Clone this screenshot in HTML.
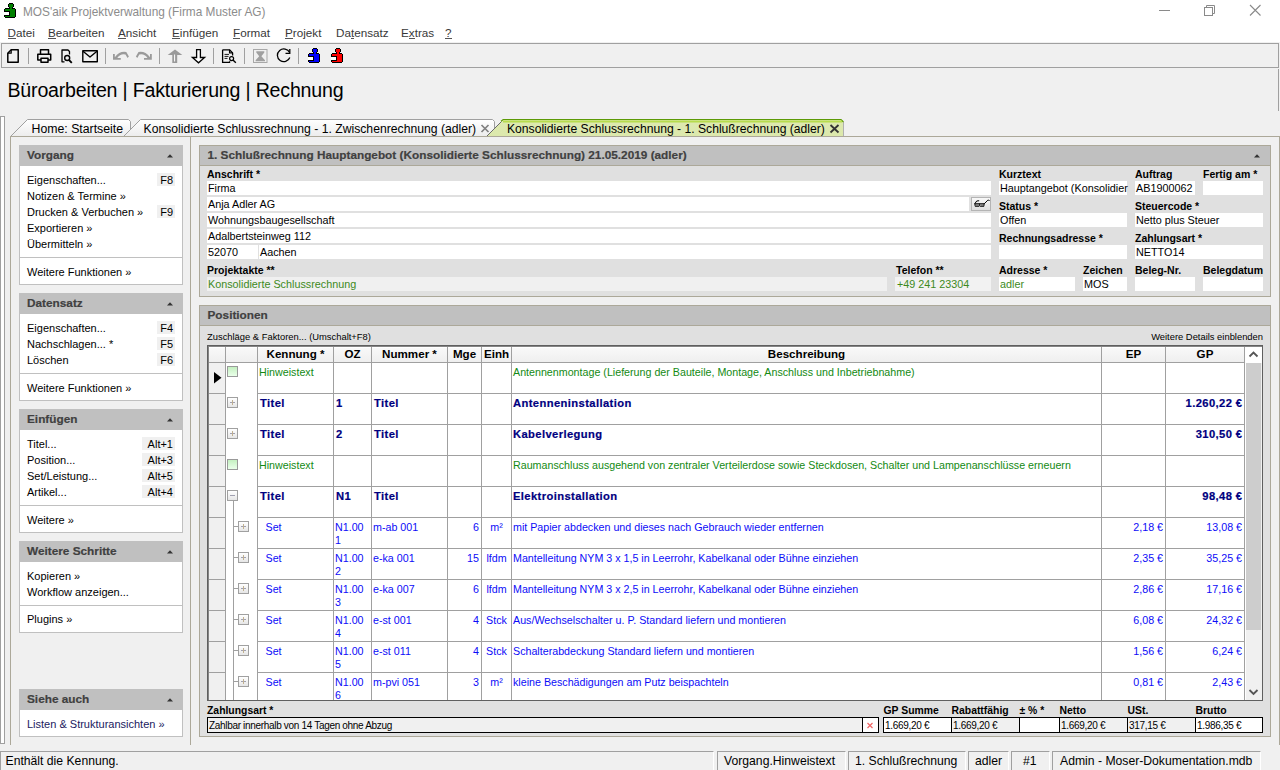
<!DOCTYPE html><html><head><meta charset="utf-8"><style>
html,body{margin:0;padding:0;}
body{width:1280px;height:770px;overflow:hidden;position:relative;background:#f0f0f0;font-family:"Liberation Sans",sans-serif;}
.t{position:absolute;white-space:nowrap;line-height:1;}
.r{position:absolute;}
svg{position:absolute;}
</style></head><body>
<div class="r" style="left:0px;top:0px;width:1280px;height:42px;background:#fff"></div>
<svg style="left:4px;top:3px" width="12" height="15" viewBox="0 0 12 15" shape-rendering="crispEdges"><rect x="5" y="0" width="4" height="1" fill="#000"/><rect x="4" y="1" width="6" height="3" fill="#000"/><rect x="5" y="4" width="4" height="1" fill="#000"/><rect x="1" y="5" width="10" height="1" fill="#000"/><rect x="0" y="6" width="12" height="8" fill="#000"/><rect x="1" y="14" width="10" height="1" fill="#000"/><rect x="0" y="9" width="5" height="3" fill="#fff"/><rect x="5" y="1" width="4" height="3" fill="#008000"/><rect x="6" y="4" width="2" height="2" fill="#008000"/><rect x="1" y="6" width="10" height="2" fill="#008000"/><rect x="6" y="8" width="5" height="5" fill="#008000"/><rect x="1" y="13" width="10" height="1" fill="#008000"/></svg>
<div class="t " style="left:23px;top:6.97px;font-size:11.85px;color:#8c8c8c;">MOS'aik Projektverwaltung (Firma Muster AG)</div>
<div class="r" style="left:1159px;top:10px;width:11px;height:1px;background:#8a8a8a"></div>
<svg style="left:1200px;top:2px" width="20" height="16" viewBox="0 0 20 16">
<rect x="4.5" y="5.5" width="8" height="8" fill="none" stroke="#8a8a8a" stroke-width="1"/>
<path d="M6.5 5.5v-2h8v8h-2" fill="none" stroke="#8a8a8a" stroke-width="1"/>
</svg>
<svg style="left:1248px;top:3px" width="14" height="14" viewBox="0 0 14 14">
<path d="M2 2L12.5 12.5M12.5 2L2 12.5" stroke="#8a8a8a" stroke-width="1.1"/>
</svg>
<div class="t " style="left:7.5px;top:26.80px;font-size:11.7px;color:#383838;">Datei</div>
<div class="r" style="left:8px;top:38px;width:8px;height:1px;background:#555"></div>
<div class="t " style="left:48px;top:26.80px;font-size:11.7px;color:#383838;">Bearbeiten</div>
<div class="r" style="left:48px;top:38px;width:8px;height:1px;background:#555"></div>
<div class="t " style="left:118px;top:26.80px;font-size:11.7px;color:#383838;">Ansicht</div>
<div class="r" style="left:118px;top:38px;width:8px;height:1px;background:#555"></div>
<div class="t " style="left:172px;top:26.80px;font-size:11.7px;color:#383838;">Einfügen</div>
<div class="r" style="left:172px;top:38px;width:8px;height:1px;background:#555"></div>
<div class="t " style="left:233px;top:26.80px;font-size:11.7px;color:#383838;">Format</div>
<div class="r" style="left:233px;top:38px;width:7px;height:1px;background:#555"></div>
<div class="t " style="left:285px;top:26.80px;font-size:11.7px;color:#383838;">Projekt</div>
<div class="r" style="left:285px;top:38px;width:8px;height:1px;background:#555"></div>
<div class="t " style="left:336px;top:26.80px;font-size:11.7px;color:#383838;">Datensatz</div>
<div class="r" style="left:351px;top:38px;width:3px;height:1px;background:#555"></div>
<div class="t " style="left:401px;top:26.80px;font-size:11.7px;color:#383838;">Extras</div>
<div class="r" style="left:409px;top:38px;width:6px;height:1px;background:#555"></div>
<div class="t " style="left:445px;top:26.80px;font-size:11.7px;color:#383838;">?</div>
<div class="r" style="left:445px;top:38px;width:7px;height:1px;background:#555"></div>
<div class="r" style="left:0px;top:42px;width:1280px;height:1px;background:#f0f0f0"></div>
<div class="r" style="left:1px;top:43px;width:1278px;height:25px;border:1px solid #a0a0a0;box-sizing:border-box;background:#f0f0f0;"></div>
<div class="r" style="left:28px;top:48px;width:1px;height:16px;background:#a0a0a0"></div>
<div class="r" style="left:105px;top:48px;width:1px;height:16px;background:#a0a0a0"></div>
<div class="r" style="left:159px;top:48px;width:1px;height:16px;background:#a0a0a0"></div>
<div class="r" style="left:213px;top:48px;width:1px;height:16px;background:#a0a0a0"></div>
<div class="r" style="left:244px;top:48px;width:1px;height:16px;background:#a0a0a0"></div>
<div class="r" style="left:298px;top:48px;width:1px;height:16px;background:#a0a0a0"></div>
<svg style="left:0;top:44px" width="360" height="23" viewBox="0 44 360 23">
<g fill="none" stroke="#000" stroke-width="1.5" stroke-linejoin="round">
 <path d="M11.2 49.8H18.2V62.2H7.8V53.2z"/><path d="M7.8 53.2H11.2V49.8" stroke-width="1.2"/>
 <path d="M40.5 54V49.8H48.5V54"/>
 <path d="M41 60H37.8V54.3H50.7V60H48"/>
 <rect x="41" y="58.3" width="7" height="4"/>
 <path d="M64.5 61.8H62V50h6l1.5 1.5v3" stroke-width="1.3"/>
 <circle cx="67.2" cy="58" r="2.5" stroke-width="1.4"/><path d="M69 60l2.8 2.8" stroke-width="1.8"/>
 <rect x="82.8" y="50.8" width="14.5" height="11" stroke-width="1.4"/><path d="M83 51.2l7 5.8 7-5.8" stroke-width="1.4"/>
</g>
<g fill="#9a9a9a">
 <path d="M113 54h1.8v3.2q5-6.5 11.5-5.2l2.6 4.6-1.4 1.4-2-3.4q-5-1.2-8.2 3.4h3.5v1.8h-7.8z"/>
 <path d="M151.8 54h-1.8v3.2q-5-6.5-11.5-5.2l-2.6 4.6 1.4 1.4 2-3.4q5-1.2 8.2 3.4h-3.5v1.8h7.8z"/>
 <path d="M175 49.5L182.3 55H177.2V63H172.3V55H167.7z"/>
</g>
<path d="M174.6 54.5V61.5" stroke="#fff" stroke-width="1"/>
<path d="M196.6 49.6H200.4V57.5H204.6L198.5 62.8 192.4 57.5H196.6z" fill="#fff" stroke="#000" stroke-width="1.3" stroke-linejoin="miter"/>
<g fill="none" stroke="#000" stroke-linejoin="round">
 <path d="M222.6 49.8H229.5L232.6 52.9V55.5M229.6 61.2V62.4H222.6V49.8" stroke-width="1.3"/>
 <path d="M229.5 49.8V52.9H232.6" stroke-width="1.1"/>
 <path d="M224.5 54.4H229M224.5 56.4H228.5M224.5 58.4H227.5" stroke-width="0.9"/>
 <circle cx="231.6" cy="58.6" r="2" stroke-width="1.2"/><path d="M233 60l2.8 2.8" stroke-width="1.4"/>
</g>
<rect x="253.5" y="49.5" width="13.5" height="13" fill="none" stroke="#a8a8a8" stroke-width="1"/>
<path d="M256.3 51.2H264.3V52.6L261.4 56.2L265 60.2V61.3H255.6V60.2L259.2 56.2L256.3 52.6z" fill="#a0a0a0"/>
<path d="M289.6 52.6A6.4 6.4 0 1 0 289.8 57.5" fill="none" stroke="#000" stroke-width="1.3"/>
<path d="M285.5 53.3H289.8V49" fill="none" stroke="#000" stroke-width="1.3"/>
</svg>
<svg style="left:308px;top:48px" width="12" height="15" viewBox="0 0 12 15" shape-rendering="crispEdges"><rect x="5" y="0" width="4" height="1" fill="#000"/><rect x="4" y="1" width="6" height="3" fill="#000"/><rect x="5" y="4" width="4" height="1" fill="#000"/><rect x="1" y="5" width="10" height="1" fill="#000"/><rect x="0" y="6" width="12" height="8" fill="#000"/><rect x="1" y="14" width="10" height="1" fill="#000"/><rect x="0" y="9" width="5" height="3" fill="#fff"/><rect x="5" y="1" width="4" height="3" fill="#0000ff"/><rect x="6" y="4" width="2" height="2" fill="#0000ff"/><rect x="1" y="6" width="10" height="2" fill="#0000ff"/><rect x="6" y="8" width="5" height="5" fill="#0000ff"/><rect x="1" y="13" width="10" height="1" fill="#0000ff"/></svg>
<svg style="left:331px;top:48px" width="12" height="15" viewBox="0 0 12 15" shape-rendering="crispEdges"><rect x="5" y="0" width="4" height="1" fill="#000"/><rect x="4" y="1" width="6" height="3" fill="#000"/><rect x="5" y="4" width="4" height="1" fill="#000"/><rect x="1" y="5" width="10" height="1" fill="#000"/><rect x="0" y="6" width="12" height="8" fill="#000"/><rect x="1" y="14" width="10" height="1" fill="#000"/><rect x="0" y="9" width="5" height="3" fill="#fff"/><rect x="5" y="1" width="4" height="3" fill="#ff0000"/><rect x="6" y="4" width="2" height="2" fill="#ff0000"/><rect x="1" y="6" width="10" height="2" fill="#ff0000"/><rect x="6" y="8" width="5" height="5" fill="#ff0000"/><rect x="1" y="13" width="10" height="1" fill="#ff0000"/></svg>
<div class="r" style="left:1278px;top:69px;width:1px;height:42px;background:#a0a0a0"></div>
<div class="t " style="left:7.5px;top:81.01px;font-size:19.6px;color:#000;letter-spacing:-0.2px;">Büroarbeiten | Fakturierung | Rechnung</div>
<div class="r" style="left:0px;top:116px;width:5px;height:628px;border:1px solid #a0a0a0;border-bottom:1px solid #a0a0a0;box-sizing:border-box;background:#fff"></div>
<svg style="left:0;top:110px" width="1280" height="30" viewBox="0 110 1280 30">
<defs>
<linearGradient id="tg" x1="0" y1="0" x2="0" y2="1"><stop offset="0" stop-color="#ffffff"/><stop offset="1" stop-color="#ececec"/></linearGradient>
<linearGradient id="ag" x1="0" y1="0" x2="0" y2="1"><stop offset="0" stop-color="#dde9b0"/><stop offset="1" stop-color="#dce8ac"/></linearGradient>
</defs>
<path d="M10.5 136.5L27.5 119.5H128.5L130.5 121.5V136.5" fill="url(#tg)" stroke="#a0a0a0" stroke-width="1"/>
<path d="M123.5 136.5L140.5 119.5H492.5L494.5 121.5V136.5" fill="url(#tg)" stroke="#a0a0a0" stroke-width="1"/>
<path d="M486.5 136.5L503.5 119.5H841l2.5 2.5V136.5z" fill="url(#ag)" stroke="none"/>
<path d="M486.5 136.5L501.5 121.5" stroke="#6a6a6a" stroke-width="1" fill="none"/>
<path d="M843.5 136.5V122" stroke="#b0b0b0" stroke-width="1"/>
<path d="M501 121.2L503.2 119.5H841l2.5 2.5" stroke="#5c9a06" stroke-width="1.2" fill="none"/>
<path d="M503 121.5H842" stroke="#b7dc4e" stroke-width="2"/>
<path d="M10 136.5H1280" stroke="#aca899" stroke-width="1"/>
<path d="M481.5 125l7 7M488.5 125l-7 7" stroke="#808080" stroke-width="1.7"/>
<path d="M830.5 125l8 7.5M838.5 125l-8 7.5" stroke="#333" stroke-width="1.8"/>
</svg>
<div class="t " style="left:31.5px;top:123.19px;font-size:12.3px;color:#000;">Home: Startseite</div>
<div class="t " style="left:143.5px;top:123.27px;font-size:12.2px;color:#000;">Konsolidierte Schlussrechnung - 1. Zwischenrechnung (adler)</div>
<div class="t " style="left:507px;top:123.32px;font-size:12.15px;color:#000;">Konsolidierte Schlussrechnung - 1. Schlußrechnung (adler)</div>
<div class="r" style="left:10px;top:137px;width:1px;height:608px;background:#aca899"></div>
<div class="r" style="left:1279px;top:137px;width:1px;height:608px;background:#aca899"></div>
<div class="r" style="left:190px;top:137px;width:1px;height:608px;background:#aca899"></div>
<div class="r" style="left:19px;top:145px;width:164px;height:21px;background:#c0c0c0"></div>
<div class="r" style="left:19px;top:165px;width:164px;height:120px;border:1px solid #c0c0c0;box-sizing:border-box;background:#fff;"></div>
<div class="t " style="left:27px;top:150.01px;font-size:11.8px;color:#404040;font-weight:bold;-webkit-text-stroke:0.2px #404040;">Vorgang</div>
<svg style="left:166px;top:153px" width="8" height="5" viewBox="0 0 8 5"><path d="M1 4.5L4 1.2 7 4.5z" fill="#333"/></svg>
<div class="r" style="left:19px;top:257px;width:164px;height:1px;background:#c0c0c0"></div>
<div class="t " style="left:27px;top:174.69px;font-size:11px;color:#000;">Eigenschaften...</div>
<div class="r" style="left:157px;top:173px;width:18px;height:13px;background:#f0f0f0"></div>
<div class="t" style="right:1107px;top:174.69px;font-size:11px;color:#000;">F8</div>
<div class="t " style="left:27px;top:190.69px;font-size:11px;color:#000;">Notizen &amp; Termine »</div>
<div class="t " style="left:27px;top:206.69px;font-size:11px;color:#000;">Drucken &amp; Verbuchen »</div>
<div class="r" style="left:157px;top:205px;width:18px;height:13px;background:#f0f0f0"></div>
<div class="t" style="right:1107px;top:206.69px;font-size:11px;color:#000;">F9</div>
<div class="t " style="left:27px;top:222.69px;font-size:11px;color:#000;">Exportieren »</div>
<div class="t " style="left:27px;top:238.69px;font-size:11px;color:#000;">Übermitteln »</div>
<div class="t " style="left:27px;top:266.69px;font-size:11px;color:#000;">Weitere Funktionen »</div>
<div class="r" style="left:19px;top:293px;width:164px;height:21px;background:#c0c0c0"></div>
<div class="r" style="left:19px;top:313px;width:164px;height:88px;border:1px solid #c0c0c0;box-sizing:border-box;background:#fff;"></div>
<div class="t " style="left:27px;top:298.01px;font-size:11.8px;color:#404040;font-weight:bold;-webkit-text-stroke:0.2px #404040;">Datensatz</div>
<svg style="left:166px;top:301px" width="8" height="5" viewBox="0 0 8 5"><path d="M1 4.5L4 1.2 7 4.5z" fill="#333"/></svg>
<div class="r" style="left:19px;top:373px;width:164px;height:1px;background:#c0c0c0"></div>
<div class="t " style="left:27px;top:322.69px;font-size:11px;color:#000;">Eigenschaften...</div>
<div class="r" style="left:157px;top:321px;width:18px;height:13px;background:#f0f0f0"></div>
<div class="t" style="right:1107px;top:322.69px;font-size:11px;color:#000;">F4</div>
<div class="t " style="left:27px;top:338.69px;font-size:11px;color:#000;">Nachschlagen... *</div>
<div class="r" style="left:157px;top:337px;width:18px;height:13px;background:#f0f0f0"></div>
<div class="t" style="right:1107px;top:338.69px;font-size:11px;color:#000;">F5</div>
<div class="t " style="left:27px;top:354.69px;font-size:11px;color:#000;">Löschen</div>
<div class="r" style="left:157px;top:353px;width:18px;height:13px;background:#f0f0f0"></div>
<div class="t" style="right:1107px;top:354.69px;font-size:11px;color:#000;">F6</div>
<div class="t " style="left:27px;top:383.29px;font-size:11px;color:#000;">Weitere Funktionen »</div>
<div class="r" style="left:19px;top:409px;width:164px;height:21px;background:#c0c0c0"></div>
<div class="r" style="left:19px;top:429px;width:164px;height:104px;border:1px solid #c0c0c0;box-sizing:border-box;background:#fff;"></div>
<div class="t " style="left:27px;top:414.01px;font-size:11.8px;color:#404040;font-weight:bold;-webkit-text-stroke:0.2px #404040;">Einfügen</div>
<svg style="left:166px;top:417px" width="8" height="5" viewBox="0 0 8 5"><path d="M1 4.5L4 1.2 7 4.5z" fill="#333"/></svg>
<div class="r" style="left:19px;top:505px;width:164px;height:1px;background:#c0c0c0"></div>
<div class="t " style="left:27px;top:438.69px;font-size:11px;color:#000;">Titel...</div>
<div class="r" style="left:142px;top:437px;width:33px;height:13px;background:#f0f0f0"></div>
<div class="t" style="right:1107px;top:438.69px;font-size:11px;color:#000;">Alt+1</div>
<div class="t " style="left:27px;top:454.69px;font-size:11px;color:#000;">Position...</div>
<div class="r" style="left:142px;top:453px;width:33px;height:13px;background:#f0f0f0"></div>
<div class="t" style="right:1107px;top:454.69px;font-size:11px;color:#000;">Alt+3</div>
<div class="t " style="left:27px;top:470.69px;font-size:11px;color:#000;">Set/Leistung...</div>
<div class="r" style="left:142px;top:469px;width:33px;height:13px;background:#f0f0f0"></div>
<div class="t" style="right:1107px;top:470.69px;font-size:11px;color:#000;">Alt+5</div>
<div class="t " style="left:27px;top:486.69px;font-size:11px;color:#000;">Artikel...</div>
<div class="r" style="left:142px;top:485px;width:33px;height:13px;background:#f0f0f0"></div>
<div class="t" style="right:1107px;top:486.69px;font-size:11px;color:#000;">Alt+4</div>
<div class="t " style="left:27px;top:515.19px;font-size:11px;color:#000;">Weitere »</div>
<div class="r" style="left:19px;top:541px;width:164px;height:21px;background:#c0c0c0"></div>
<div class="r" style="left:19px;top:561px;width:164px;height:72px;border:1px solid #c0c0c0;box-sizing:border-box;background:#fff;"></div>
<div class="t " style="left:27px;top:546.01px;font-size:11.8px;color:#404040;font-weight:bold;-webkit-text-stroke:0.2px #404040;">Weitere Schritte</div>
<svg style="left:166px;top:549px" width="8" height="5" viewBox="0 0 8 5"><path d="M1 4.5L4 1.2 7 4.5z" fill="#333"/></svg>
<div class="r" style="left:19px;top:605px;width:164px;height:1px;background:#c0c0c0"></div>
<div class="t " style="left:27px;top:570.69px;font-size:11px;color:#000;">Kopieren »</div>
<div class="t " style="left:27px;top:586.69px;font-size:11px;color:#000;">Workflow anzeigen...</div>
<div class="t " style="left:27px;top:614.09px;font-size:11px;color:#000;">Plugins »</div>
<div class="r" style="left:19px;top:689px;width:164px;height:21px;background:#c0c0c0"></div>
<div class="r" style="left:19px;top:709px;width:164px;height:28px;border:1px solid #c0c0c0;box-sizing:border-box;background:#fff;"></div>
<div class="t " style="left:27px;top:694.01px;font-size:11.8px;color:#404040;font-weight:bold;-webkit-text-stroke:0.2px #404040;">Siehe auch</div>
<svg style="left:166px;top:697px" width="8" height="5" viewBox="0 0 8 5"><path d="M1 4.5L4 1.2 7 4.5z" fill="#333"/></svg>
<div class="t " style="left:27px;top:718.69px;font-size:11px;color:#1a1a60;">Listen &amp; Strukturansichten »</div>
<div class="r" style="left:199px;top:145px;width:1072px;height:152px;border:1px solid #aca899;box-sizing:border-box;background:#e0e0e0;"></div>
<div class="r" style="left:200px;top:146px;width:1070px;height:19px;background:#c0c0c0"></div>
<div class="r" style="left:200px;top:165px;width:1070px;height:1px;background:#aca899"></div>
<div class="t " style="left:207.5px;top:150.01px;font-size:11.8px;color:#404040;font-weight:bold;-webkit-text-stroke:0.2px #404040;">1. Schlußrechnung Hauptangebot (Konsolidierte Schlussrechnung) 21.05.2019 (adler)</div>
<svg style="left:1253px;top:153px" width="8" height="5" viewBox="0 0 8 5"><path d="M1 4.5L4 1.2 7 4.5z" fill="#333"/></svg>
<div class="t " style="left:207px;top:168.91px;font-size:10.5px;color:#000;font-weight:bold;">Anschrift *</div>
<div class="r" style="left:207px;top:181px;width:784px;height:14px;background:#fff"></div>
<div class="t " style="left:208px;top:182.56px;font-size:10.8px;color:#000;">Firma</div>
<div class="r" style="left:207px;top:197px;width:762px;height:14px;background:#fff"></div>
<div class="t " style="left:208px;top:198.56px;font-size:10.8px;color:#000;">Anja Adler AG</div>
<div class="r" style="left:971px;top:197px;width:20px;height:14px;border:1px solid #b4b4b4;box-sizing:border-box;background:linear-gradient(#f8f8f8,#dedede)"></div>
<svg style="left:971px;top:197px" width="20" height="14" viewBox="0 0 20 14">
<g fill="none" stroke="#000" stroke-linecap="round"><path d="M3.8 6.8H13.2" stroke-width="1.3"/><path d="M4.6 9.2H7.6M9.6 9.2H12.6" stroke-width="1.2"/>
<path d="M4 7V8.8M8.5 7V8.8M13 7V8.6" stroke-width="0.8"/>
<path d="M4 6.2Q5.5 2.8 7.8 3.6" stroke-width="1"/><path d="M13.4 6.6L16.8 3.2Q17.8 2.6 18.4 3.6" stroke-width="1"/></g></svg>
<div class="r" style="left:207px;top:213px;width:784px;height:14px;background:#fff"></div>
<div class="t " style="left:208px;top:214.56px;font-size:10.8px;color:#000;">Wohnungsbaugesellschaft</div>
<div class="r" style="left:207px;top:229px;width:784px;height:14px;background:#fff"></div>
<div class="t " style="left:208px;top:230.56px;font-size:10.8px;color:#000;">Adalbertsteinweg 112</div>
<div class="r" style="left:207px;top:245px;width:51px;height:14px;background:#fff"></div>
<div class="t " style="left:208px;top:246.56px;font-size:10.8px;color:#000;">52070</div>
<div class="r" style="left:259px;top:245px;width:732px;height:14px;background:#fff"></div>
<div class="t " style="left:260px;top:246.56px;font-size:10.8px;color:#000;">Aachen</div>
<div class="t " style="left:207px;top:264.91px;font-size:10.5px;color:#000;font-weight:bold;">Projektakte **</div>
<div class="r" style="left:207px;top:277px;width:680px;height:14px;background:#f0f0f0"></div>
<div class="t " style="left:208px;top:278.56px;font-size:10.8px;color:#3d8a1c;">Konsolidierte Schlussrechnung</div>
<div class="t " style="left:896px;top:264.91px;font-size:10.5px;color:#000;font-weight:bold;">Telefon **</div>
<div class="r" style="left:895px;top:277px;width:96px;height:14px;background:#f2f2f2"></div>
<div class="t " style="left:897px;top:278.56px;font-size:10.8px;color:#3d8a1c;">+49 241 23304</div>
<div class="t " style="left:999px;top:168.91px;font-size:10.5px;color:#000;font-weight:bold;">Kurztext</div>
<div class="t " style="left:1135px;top:168.91px;font-size:10.5px;color:#000;font-weight:bold;">Auftrag</div>
<div class="t " style="left:1203px;top:168.91px;font-size:10.5px;color:#000;font-weight:bold;">Fertig am *</div>
<div class="r" style="left:999px;top:181px;width:128px;height:14px;background:#fff"></div>
<div class="t " style="left:1000px;top:182.56px;font-size:10.8px;color:#000;">Hauptangebot (Konsolidier</div>
<div class="r" style="left:1135px;top:181px;width:60px;height:14px;background:#fff"></div>
<div class="t " style="left:1136px;top:182.56px;font-size:10.8px;color:#000;">AB1900062</div>
<div class="r" style="left:1203px;top:181px;width:60px;height:14px;background:#fff"></div>
<div class="t " style="left:999px;top:200.91px;font-size:10.5px;color:#000;font-weight:bold;">Status *</div>
<div class="t " style="left:1135px;top:200.91px;font-size:10.5px;color:#000;font-weight:bold;">Steuercode *</div>
<div class="r" style="left:999px;top:213px;width:128px;height:14px;background:#fff"></div>
<div class="t " style="left:1000px;top:214.56px;font-size:10.8px;color:#000;">Offen</div>
<div class="r" style="left:1135px;top:213px;width:128px;height:14px;background:#fff"></div>
<div class="t " style="left:1136px;top:214.56px;font-size:10.8px;color:#000;">Netto plus Steuer</div>
<div class="t " style="left:999px;top:232.91px;font-size:10.5px;color:#000;font-weight:bold;">Rechnungsadresse *</div>
<div class="t " style="left:1135px;top:232.91px;font-size:10.5px;color:#000;font-weight:bold;">Zahlungsart *</div>
<div class="r" style="left:999px;top:245px;width:128px;height:14px;background:#fff"></div>
<div class="r" style="left:1135px;top:245px;width:128px;height:14px;background:#fff"></div>
<div class="t " style="left:1136px;top:246.56px;font-size:10.8px;color:#000;">NETTO14</div>
<div class="t " style="left:999px;top:264.91px;font-size:10.5px;color:#000;font-weight:bold;">Adresse *</div>
<div class="t " style="left:1083px;top:264.91px;font-size:10.5px;color:#000;font-weight:bold;">Zeichen</div>
<div class="t " style="left:1135px;top:264.91px;font-size:10.5px;color:#000;font-weight:bold;">Beleg-Nr.</div>
<div class="t " style="left:1203px;top:264.91px;font-size:10.5px;color:#000;font-weight:bold;">Belegdatum</div>
<div class="r" style="left:999px;top:277px;width:76px;height:14px;background:#fff"></div>
<div class="t " style="left:1000px;top:278.56px;font-size:10.8px;color:#3d8a1c;">adler</div>
<div class="r" style="left:1083px;top:277px;width:44px;height:14px;background:#fff"></div>
<div class="t " style="left:1084px;top:278.56px;font-size:10.8px;color:#000;">MOS</div>
<div class="r" style="left:1135px;top:277px;width:60px;height:14px;background:#fff"></div>
<div class="r" style="left:1203px;top:277px;width:60px;height:14px;background:#fff"></div>
<div class="r" style="left:199px;top:305px;width:1072px;height:432px;border:1px solid #aca899;box-sizing:border-box;background:#e0e0e0;"></div>
<div class="r" style="left:200px;top:306px;width:1070px;height:19px;background:#c0c0c0"></div>
<div class="r" style="left:200px;top:325px;width:1070px;height:1px;background:#aca899"></div>
<div class="t " style="left:207.5px;top:309.81px;font-size:11.8px;color:#404040;font-weight:bold;-webkit-text-stroke:0.2px #404040;">Positionen</div>
<div class="t " style="left:207px;top:332.04px;font-size:9.4px;color:#000;">Zuschläge &amp; Faktoren... (Umschalt+F8)</div>
<div class="t" style="right:17px;top:331.54px;font-size:9.4px;color:#000;">Weitere Details einblenden</div>
<div class="r" style="left:207px;top:345px;width:1056px;height:356px;border:1px solid #5f5f5f;box-sizing:border-box;background:#fff"></div>
<div class="r" style="left:208px;top:346px;width:1037px;height:16px;background:linear-gradient(#fafafa,#efefef)"></div>
<div class="r" style="left:209px;top:347px;width:1035px;height:1px;background:#ffffff"></div>
<div class="r" style="left:208px;top:363px;width:17px;height:337px;background:#f0f0f0"></div>
<div class="r" style="left:208px;top:362px;width:1036px;height:1px;background:#a0a0a0"></div>
<div class="r" style="left:225px;top:346px;width:1px;height:354px;background:#a0a0a0"></div>
<div class="r" style="left:257px;top:346px;width:1px;height:354px;background:#a0a0a0"></div>
<div class="r" style="left:333px;top:346px;width:1px;height:354px;background:#a0a0a0"></div>
<div class="r" style="left:371px;top:346px;width:1px;height:354px;background:#a0a0a0"></div>
<div class="r" style="left:447px;top:346px;width:1px;height:354px;background:#a0a0a0"></div>
<div class="r" style="left:481px;top:346px;width:1px;height:354px;background:#a0a0a0"></div>
<div class="r" style="left:511px;top:346px;width:1px;height:354px;background:#a0a0a0"></div>
<div class="r" style="left:1101px;top:346px;width:1px;height:354px;background:#a0a0a0"></div>
<div class="r" style="left:1165px;top:346px;width:1px;height:354px;background:#a0a0a0"></div>
<div class="r" style="left:1244px;top:346px;width:1px;height:354px;background:#a0a0a0"></div>
<div class="r" style="left:208px;top:393px;width:17px;height:1px;background:#a0a0a0"></div>
<div class="r" style="left:257px;top:393px;width:987px;height:1px;background:#a0a0a0"></div>
<div class="r" style="left:208px;top:424px;width:17px;height:1px;background:#a0a0a0"></div>
<div class="r" style="left:257px;top:424px;width:987px;height:1px;background:#a0a0a0"></div>
<div class="r" style="left:208px;top:455px;width:17px;height:1px;background:#a0a0a0"></div>
<div class="r" style="left:257px;top:455px;width:987px;height:1px;background:#a0a0a0"></div>
<div class="r" style="left:208px;top:486px;width:17px;height:1px;background:#a0a0a0"></div>
<div class="r" style="left:257px;top:486px;width:987px;height:1px;background:#a0a0a0"></div>
<div class="r" style="left:208px;top:517px;width:17px;height:1px;background:#a0a0a0"></div>
<div class="r" style="left:257px;top:517px;width:987px;height:1px;background:#a0a0a0"></div>
<div class="r" style="left:208px;top:548px;width:17px;height:1px;background:#a0a0a0"></div>
<div class="r" style="left:257px;top:548px;width:987px;height:1px;background:#a0a0a0"></div>
<div class="r" style="left:208px;top:579px;width:17px;height:1px;background:#a0a0a0"></div>
<div class="r" style="left:257px;top:579px;width:987px;height:1px;background:#a0a0a0"></div>
<div class="r" style="left:208px;top:610px;width:17px;height:1px;background:#a0a0a0"></div>
<div class="r" style="left:257px;top:610px;width:987px;height:1px;background:#a0a0a0"></div>
<div class="r" style="left:208px;top:641px;width:17px;height:1px;background:#a0a0a0"></div>
<div class="r" style="left:257px;top:641px;width:987px;height:1px;background:#a0a0a0"></div>
<div class="r" style="left:208px;top:672px;width:17px;height:1px;background:#a0a0a0"></div>
<div class="r" style="left:257px;top:672px;width:987px;height:1px;background:#a0a0a0"></div>
<div class="r" style="left:1245px;top:346px;width:17px;height:354px;background:#f0f0f0;border-left:1px solid #fff;box-sizing:border-box"></div>
<div class="r" style="left:1245px;top:346px;width:17px;height:17px;background:#fff"></div>
<div class="r" style="left:1246px;top:363px;width:15px;height:267px;background:#cdcdcd"></div>
<svg style="left:1245px;top:346px" width="17" height="17" viewBox="0 0 17 17"><path d="M4.5 10.5L8.5 6.5 12.5 10.5" fill="none" stroke="#555" stroke-width="1.8"/></svg>
<svg style="left:1245px;top:684px" width="17" height="16" viewBox="0 0 17 16"><path d="M4.5 6L8.5 10 12.5 6" fill="none" stroke="#555" stroke-width="1.8"/></svg>
<div class="r" style="left:208px;top:346px;width:1px;height:354px;background:#858585"></div>
<div class="r" style="left:208px;top:346px;width:1054px;height:1px;background:#858585"></div>
<div class="t" style="left:95.5px;width:400px;text-align:center;top:348.18px;font-size:11.6px;color:#000;font-weight:bold;">Kennung *</div>
<div class="t" style="left:152.5px;width:400px;text-align:center;top:348.18px;font-size:11.6px;color:#000;font-weight:bold;">OZ</div>
<div class="t" style="left:209.5px;width:400px;text-align:center;top:348.18px;font-size:11.6px;color:#000;font-weight:bold;">Nummer *</div>
<div class="t" style="left:264.5px;width:400px;text-align:center;top:348.18px;font-size:11.6px;color:#000;font-weight:bold;">Mge</div>
<div class="t" style="left:296.5px;width:400px;text-align:center;top:348.18px;font-size:11.6px;color:#000;font-weight:bold;">Einh</div>
<div class="t" style="left:606.5px;width:400px;text-align:center;top:348.18px;font-size:11.6px;color:#000;font-weight:bold;">Beschreibung</div>
<div class="t" style="left:933.5px;width:400px;text-align:center;top:348.18px;font-size:11.6px;color:#000;font-weight:bold;">EP</div>
<div class="t" style="left:1005.0px;width:400px;text-align:center;top:348.18px;font-size:11.6px;color:#000;font-weight:bold;">GP</div>
<svg style="left:212px;top:370px" width="12" height="16" viewBox="0 0 12 16"><path d="M2 2L9.5 7.8 2 13.6z" fill="#000"/></svg>
<div class="r" style="left:227px;top:366px;width:11px;height:11px;border:1px solid #999;box-sizing:border-box;background:linear-gradient(#c4f0c0,#eaffea)"></div>
<div class="r" style="left:227px;top:397px;width:11px;height:11px;border:1px solid #a0a0a0;box-sizing:border-box;background:linear-gradient(#fff,#e6e6e6)"></div>
<div class="r" style="left:230px;top:402px;width:5px;height:1px;background:#a0a0b0"></div>
<div class="r" style="left:232px;top:400px;width:1px;height:5px;background:#c0b090"></div>
<div class="r" style="left:227px;top:428px;width:11px;height:11px;border:1px solid #a0a0a0;box-sizing:border-box;background:linear-gradient(#fff,#e6e6e6)"></div>
<div class="r" style="left:230px;top:433px;width:5px;height:1px;background:#a0a0b0"></div>
<div class="r" style="left:232px;top:431px;width:1px;height:5px;background:#c0b090"></div>
<div class="r" style="left:227px;top:459px;width:11px;height:11px;border:1px solid #999;box-sizing:border-box;background:linear-gradient(#c4f0c0,#eaffea)"></div>
<div class="r" style="left:227px;top:490px;width:11px;height:11px;border:1px solid #a0a0a0;box-sizing:border-box;background:linear-gradient(#fff,#e6e6e6)"></div>
<div class="r" style="left:230px;top:495px;width:5px;height:1px;background:#a0a0b0"></div>
<div class="r" style="left:233px;top:501px;width:1px;height:199px;background:#a0a0a0"></div>
<div class="r" style="left:234px;top:526px;width:5px;height:1px;background:#a0a0a0"></div>
<div class="r" style="left:238px;top:521px;width:11px;height:11px;border:1px solid #a0a0a0;box-sizing:border-box;background:linear-gradient(#fff,#e6e6e6)"></div>
<div class="r" style="left:241px;top:526px;width:5px;height:1px;background:#a0a0b0"></div>
<div class="r" style="left:243px;top:524px;width:1px;height:5px;background:#c0b090"></div>
<div class="r" style="left:234px;top:557px;width:5px;height:1px;background:#a0a0a0"></div>
<div class="r" style="left:238px;top:552px;width:11px;height:11px;border:1px solid #a0a0a0;box-sizing:border-box;background:linear-gradient(#fff,#e6e6e6)"></div>
<div class="r" style="left:241px;top:557px;width:5px;height:1px;background:#a0a0b0"></div>
<div class="r" style="left:243px;top:555px;width:1px;height:5px;background:#c0b090"></div>
<div class="r" style="left:234px;top:588px;width:5px;height:1px;background:#a0a0a0"></div>
<div class="r" style="left:238px;top:583px;width:11px;height:11px;border:1px solid #a0a0a0;box-sizing:border-box;background:linear-gradient(#fff,#e6e6e6)"></div>
<div class="r" style="left:241px;top:588px;width:5px;height:1px;background:#a0a0b0"></div>
<div class="r" style="left:243px;top:586px;width:1px;height:5px;background:#c0b090"></div>
<div class="r" style="left:234px;top:619px;width:5px;height:1px;background:#a0a0a0"></div>
<div class="r" style="left:238px;top:614px;width:11px;height:11px;border:1px solid #a0a0a0;box-sizing:border-box;background:linear-gradient(#fff,#e6e6e6)"></div>
<div class="r" style="left:241px;top:619px;width:5px;height:1px;background:#a0a0b0"></div>
<div class="r" style="left:243px;top:617px;width:1px;height:5px;background:#c0b090"></div>
<div class="r" style="left:234px;top:650px;width:5px;height:1px;background:#a0a0a0"></div>
<div class="r" style="left:238px;top:645px;width:11px;height:11px;border:1px solid #a0a0a0;box-sizing:border-box;background:linear-gradient(#fff,#e6e6e6)"></div>
<div class="r" style="left:241px;top:650px;width:5px;height:1px;background:#a0a0b0"></div>
<div class="r" style="left:243px;top:648px;width:1px;height:5px;background:#c0b090"></div>
<div class="r" style="left:234px;top:681px;width:5px;height:1px;background:#a0a0a0"></div>
<div class="r" style="left:238px;top:676px;width:11px;height:11px;border:1px solid #a0a0a0;box-sizing:border-box;background:linear-gradient(#fff,#e6e6e6)"></div>
<div class="r" style="left:241px;top:681px;width:5px;height:1px;background:#a0a0b0"></div>
<div class="r" style="left:243px;top:679px;width:1px;height:5px;background:#c0b090"></div>
<div class="t " style="left:259px;top:366.74px;font-size:10.7px;color:#138a13;">Hinweistext</div>
<div class="t " style="left:513px;top:366.74px;font-size:10.7px;color:#138a13;">Antennenmontage (Lieferung der Bauteile, Montage, Anschluss und Inbetriebnahme)</div>
<div class="t " style="left:260px;top:398.12px;font-size:11.2px;color:#000080;font-weight:bold;letter-spacing:0.4px;-webkit-text-stroke:0.2px #000080;">Titel</div>
<div class="t " style="left:336px;top:398.12px;font-size:11.2px;color:#000080;font-weight:bold;letter-spacing:0.4px;-webkit-text-stroke:0.2px #000080;">1</div>
<div class="t " style="left:374px;top:398.12px;font-size:11.2px;color:#000080;font-weight:bold;letter-spacing:0.4px;-webkit-text-stroke:0.2px #000080;">Titel</div>
<div class="t " style="left:513px;top:398.12px;font-size:11.2px;color:#000080;font-weight:bold;letter-spacing:0.4px;-webkit-text-stroke:0.2px #000080;">Antenneninstallation</div>
<div class="t" style="right:37.59999999999991px;top:398.12px;font-size:11.2px;color:#000080;font-weight:bold;letter-spacing:0.4px;-webkit-text-stroke:0.2px #000080;">1.260,22 €</div>
<div class="t " style="left:260px;top:429.12px;font-size:11.2px;color:#000080;font-weight:bold;letter-spacing:0.4px;-webkit-text-stroke:0.2px #000080;">Titel</div>
<div class="t " style="left:336px;top:429.12px;font-size:11.2px;color:#000080;font-weight:bold;letter-spacing:0.4px;-webkit-text-stroke:0.2px #000080;">2</div>
<div class="t " style="left:374px;top:429.12px;font-size:11.2px;color:#000080;font-weight:bold;letter-spacing:0.4px;-webkit-text-stroke:0.2px #000080;">Titel</div>
<div class="t " style="left:513px;top:429.12px;font-size:11.2px;color:#000080;font-weight:bold;letter-spacing:0.4px;-webkit-text-stroke:0.2px #000080;">Kabelverlegung</div>
<div class="t" style="right:37.59999999999991px;top:429.12px;font-size:11.2px;color:#000080;font-weight:bold;letter-spacing:0.4px;-webkit-text-stroke:0.2px #000080;">310,50 €</div>
<div class="t " style="left:260px;top:491.12px;font-size:11.2px;color:#000080;font-weight:bold;letter-spacing:0.4px;-webkit-text-stroke:0.2px #000080;">Titel</div>
<div class="t " style="left:336px;top:491.12px;font-size:11.2px;color:#000080;font-weight:bold;letter-spacing:0.4px;-webkit-text-stroke:0.2px #000080;">N1</div>
<div class="t " style="left:374px;top:491.12px;font-size:11.2px;color:#000080;font-weight:bold;letter-spacing:0.4px;-webkit-text-stroke:0.2px #000080;">Titel</div>
<div class="t " style="left:513px;top:491.12px;font-size:11.2px;color:#000080;font-weight:bold;letter-spacing:0.4px;-webkit-text-stroke:0.2px #000080;">Elektroinstallation</div>
<div class="t" style="right:37.59999999999991px;top:491.12px;font-size:11.2px;color:#000080;font-weight:bold;letter-spacing:0.4px;-webkit-text-stroke:0.2px #000080;">98,48 €</div>
<div class="t " style="left:259px;top:459.74px;font-size:10.7px;color:#138a13;">Hinweistext</div>
<div class="t " style="left:513px;top:459.74px;font-size:10.7px;color:#138a13;">Raumanschluss ausgehend von zentraler Verteilerdose sowie Steckdosen, Schalter und Lampenanschlüsse erneuern</div>
<div class="t " style="left:265.5px;top:521.74px;font-size:10.7px;color:#0c0cf8;">Set</div>
<div class="t " style="left:335px;top:521.74px;font-size:10.7px;color:#0c0cf8;">N1.00</div>
<div class="t " style="left:335px;top:534.74px;font-size:10.7px;color:#0c0cf8;">1</div>
<div class="t " style="left:373px;top:521.74px;font-size:10.7px;color:#0c0cf8;">m-ab 001</div>
<div class="t" style="right:801px;top:521.74px;font-size:10.7px;color:#0c0cf8;">6</div>
<div class="t" style="left:296.5px;width:400px;text-align:center;top:521.74px;font-size:10.7px;color:#0c0cf8;">m²</div>
<div class="t " style="left:513px;top:521.74px;font-size:10.7px;color:#0c0cf8;">mit Papier abdecken und dieses nach Gebrauch wieder entfernen</div>
<div class="t" style="right:117px;top:521.74px;font-size:10.7px;color:#0c0cf8;">2,18 €</div>
<div class="t" style="right:38px;top:521.74px;font-size:10.7px;color:#0c0cf8;">13,08 €</div>
<div class="t " style="left:265.5px;top:552.74px;font-size:10.7px;color:#0c0cf8;">Set</div>
<div class="t " style="left:335px;top:552.74px;font-size:10.7px;color:#0c0cf8;">N1.00</div>
<div class="t " style="left:335px;top:565.74px;font-size:10.7px;color:#0c0cf8;">2</div>
<div class="t " style="left:373px;top:552.74px;font-size:10.7px;color:#0c0cf8;">e-ka 001</div>
<div class="t" style="right:801px;top:552.74px;font-size:10.7px;color:#0c0cf8;">15</div>
<div class="t" style="left:296.5px;width:400px;text-align:center;top:552.74px;font-size:10.7px;color:#0c0cf8;">lfdm</div>
<div class="t " style="left:513px;top:552.74px;font-size:10.7px;color:#0c0cf8;">Mantelleitung NYM 3 x 1,5 in Leerrohr, Kabelkanal oder Bühne einziehen</div>
<div class="t" style="right:117px;top:552.74px;font-size:10.7px;color:#0c0cf8;">2,35 €</div>
<div class="t" style="right:38px;top:552.74px;font-size:10.7px;color:#0c0cf8;">35,25 €</div>
<div class="t " style="left:265.5px;top:583.74px;font-size:10.7px;color:#0c0cf8;">Set</div>
<div class="t " style="left:335px;top:583.74px;font-size:10.7px;color:#0c0cf8;">N1.00</div>
<div class="t " style="left:335px;top:596.74px;font-size:10.7px;color:#0c0cf8;">3</div>
<div class="t " style="left:373px;top:583.74px;font-size:10.7px;color:#0c0cf8;">e-ka 007</div>
<div class="t" style="right:801px;top:583.74px;font-size:10.7px;color:#0c0cf8;">6</div>
<div class="t" style="left:296.5px;width:400px;text-align:center;top:583.74px;font-size:10.7px;color:#0c0cf8;">lfdm</div>
<div class="t " style="left:513px;top:583.74px;font-size:10.7px;color:#0c0cf8;">Mantelleitung NYM 3 x 2,5 in Leerrohr, Kabelkanal oder Bühne einziehen</div>
<div class="t" style="right:117px;top:583.74px;font-size:10.7px;color:#0c0cf8;">2,86 €</div>
<div class="t" style="right:38px;top:583.74px;font-size:10.7px;color:#0c0cf8;">17,16 €</div>
<div class="t " style="left:265.5px;top:614.74px;font-size:10.7px;color:#0c0cf8;">Set</div>
<div class="t " style="left:335px;top:614.74px;font-size:10.7px;color:#0c0cf8;">N1.00</div>
<div class="t " style="left:335px;top:627.74px;font-size:10.7px;color:#0c0cf8;">4</div>
<div class="t " style="left:373px;top:614.74px;font-size:10.7px;color:#0c0cf8;">e-st 001</div>
<div class="t" style="right:801px;top:614.74px;font-size:10.7px;color:#0c0cf8;">4</div>
<div class="t" style="left:296.5px;width:400px;text-align:center;top:614.74px;font-size:10.7px;color:#0c0cf8;">Stck</div>
<div class="t " style="left:513px;top:614.74px;font-size:10.7px;color:#0c0cf8;">Aus/Wechselschalter u. P. Standard liefern und montieren</div>
<div class="t" style="right:117px;top:614.74px;font-size:10.7px;color:#0c0cf8;">6,08 €</div>
<div class="t" style="right:38px;top:614.74px;font-size:10.7px;color:#0c0cf8;">24,32 €</div>
<div class="t " style="left:265.5px;top:645.74px;font-size:10.7px;color:#0c0cf8;">Set</div>
<div class="t " style="left:335px;top:645.74px;font-size:10.7px;color:#0c0cf8;">N1.00</div>
<div class="t " style="left:335px;top:658.74px;font-size:10.7px;color:#0c0cf8;">5</div>
<div class="t " style="left:373px;top:645.74px;font-size:10.7px;color:#0c0cf8;">e-st 011</div>
<div class="t" style="right:801px;top:645.74px;font-size:10.7px;color:#0c0cf8;">4</div>
<div class="t" style="left:296.5px;width:400px;text-align:center;top:645.74px;font-size:10.7px;color:#0c0cf8;">Stck</div>
<div class="t " style="left:513px;top:645.74px;font-size:10.7px;color:#0c0cf8;">Schalterabdeckung Standard liefern und montieren</div>
<div class="t" style="right:117px;top:645.74px;font-size:10.7px;color:#0c0cf8;">1,56 €</div>
<div class="t" style="right:38px;top:645.74px;font-size:10.7px;color:#0c0cf8;">6,24 €</div>
<div class="t " style="left:265.5px;top:676.74px;font-size:10.7px;color:#0c0cf8;">Set</div>
<div class="t " style="left:335px;top:676.74px;font-size:10.7px;color:#0c0cf8;">N1.00</div>
<div class="t " style="left:335px;top:689.74px;font-size:10.7px;color:#0c0cf8;">6</div>
<div class="t " style="left:373px;top:676.74px;font-size:10.7px;color:#0c0cf8;">m-pvi 051</div>
<div class="t" style="right:801px;top:676.74px;font-size:10.7px;color:#0c0cf8;">3</div>
<div class="t" style="left:296.5px;width:400px;text-align:center;top:676.74px;font-size:10.7px;color:#0c0cf8;">m²</div>
<div class="t " style="left:513px;top:676.74px;font-size:10.7px;color:#0c0cf8;">kleine Beschädigungen am Putz beispachteln</div>
<div class="t" style="right:117px;top:676.74px;font-size:10.7px;color:#0c0cf8;">0,81 €</div>
<div class="t" style="right:38px;top:676.74px;font-size:10.7px;color:#0c0cf8;">2,43 €</div>
<div class="t " style="left:207px;top:705.80px;font-size:10.4px;color:#000;font-weight:bold;">Zahlungsart *</div>
<div class="r" style="left:207px;top:717px;width:672px;height:16px;border:1px solid #000;box-sizing:border-box;background:#f0f0f0"></div>
<div class="r" style="left:862px;top:717px;width:17px;height:16px;border:1px solid #000;box-sizing:border-box;background:#fff"></div>
<svg style="left:863px;top:718px" width="15" height="14" viewBox="0 0 15 14"><path d="M4.5 5l5 5M9.5 5l-5 5" stroke="#f06464" stroke-width="1.2"/></svg>
<div class="t " style="left:209px;top:720.53px;font-size:10px;color:#000;letter-spacing:-0.32px;">Zahlbar innerhalb von 14 Tagen ohne Abzug</div>
<div class="t " style="left:883.5px;top:705.80px;font-size:10.4px;color:#000;font-weight:bold;">GP Summe</div>
<div class="t " style="left:951.5px;top:705.80px;font-size:10.4px;color:#000;font-weight:bold;">Rabattfähig</div>
<div class="t " style="left:1019.5px;top:705.80px;font-size:10.4px;color:#000;font-weight:bold;">± % *</div>
<div class="t " style="left:1059.5px;top:705.80px;font-size:10.4px;color:#000;font-weight:bold;">Netto</div>
<div class="t " style="left:1127.5px;top:705.80px;font-size:10.4px;color:#000;font-weight:bold;">USt.</div>
<div class="t " style="left:1195.5px;top:705.80px;font-size:10.4px;color:#000;font-weight:bold;">Brutto</div>
<div class="r" style="left:883px;top:717px;width:69px;height:16px;border:1px solid #000;box-sizing:border-box;background:#fff"></div>
<div class="t " style="left:885px;top:720.53px;font-size:10px;color:#000;letter-spacing:-0.3px;">1.669,20 €</div>
<div class="r" style="left:951px;top:717px;width:69px;height:16px;border:1px solid #000;box-sizing:border-box;background:#f0f0f0"></div>
<div class="t " style="left:953px;top:720.53px;font-size:10px;color:#000;letter-spacing:-0.3px;">1.669,20 €</div>
<div class="r" style="left:1019px;top:717px;width:41px;height:16px;border:1px solid #000;box-sizing:border-box;background:#fff"></div>
<div class="r" style="left:1059px;top:717px;width:69px;height:16px;border:1px solid #000;box-sizing:border-box;background:#f0f0f0"></div>
<div class="t " style="left:1061px;top:720.53px;font-size:10px;color:#000;letter-spacing:-0.3px;">1.669,20 €</div>
<div class="r" style="left:1127px;top:717px;width:69px;height:16px;border:1px solid #000;box-sizing:border-box;background:#f0f0f0"></div>
<div class="t " style="left:1129px;top:720.53px;font-size:10px;color:#000;letter-spacing:-0.3px;">317,15 €</div>
<div class="r" style="left:1195px;top:717px;width:68px;height:16px;border:1px solid #000;box-sizing:border-box;background:#fff"></div>
<div class="t " style="left:1197px;top:720.53px;font-size:10px;color:#000;letter-spacing:-0.3px;">1.986,35 €</div>
<div class="r" style="left:0px;top:751px;width:714px;height:19px;border-top:1px solid #a0a0a0;border-left:1px solid #a0a0a0;border-right:1px solid #fff;box-sizing:border-box"></div>
<div class="t " style="left:5.5px;top:754.67px;font-size:12.2px;color:#000;">Enthält die Kennung.</div>
<div class="r" style="left:717px;top:751px;width:129px;height:19px;border-top:1px solid #a0a0a0;border-left:1px solid #a0a0a0;border-right:1px solid #fff;box-sizing:border-box"></div>
<div class="t " style="left:724px;top:754.67px;font-size:12.2px;color:#000;">Vorgang.Hinweistext</div>
<div class="r" style="left:848px;top:751px;width:118px;height:19px;border-top:1px solid #a0a0a0;border-left:1px solid #a0a0a0;border-right:1px solid #fff;box-sizing:border-box"></div>
<div class="t " style="left:855px;top:754.67px;font-size:12.2px;color:#000;">1. Schlußrechnung</div>
<div class="r" style="left:968px;top:751px;width:41px;height:19px;border-top:1px solid #a0a0a0;border-left:1px solid #a0a0a0;border-right:1px solid #fff;box-sizing:border-box"></div>
<div class="t " style="left:975px;top:754.67px;font-size:12.2px;color:#000;">adler</div>
<div class="r" style="left:1011px;top:751px;width:39px;height:19px;border-top:1px solid #a0a0a0;border-left:1px solid #a0a0a0;border-right:1px solid #fff;box-sizing:border-box"></div>
<div class="t " style="left:1023px;top:754.67px;font-size:12.2px;color:#000;">#1</div>
<div class="r" style="left:1052px;top:751px;width:209px;height:19px;border-top:1px solid #a0a0a0;border-left:1px solid #a0a0a0;border-right:1px solid #fff;box-sizing:border-box"></div>
<div class="t " style="left:1060px;top:754.67px;font-size:12.2px;color:#000;">Admin - Moser-Dokumentation.mdb</div>
</body></html>
